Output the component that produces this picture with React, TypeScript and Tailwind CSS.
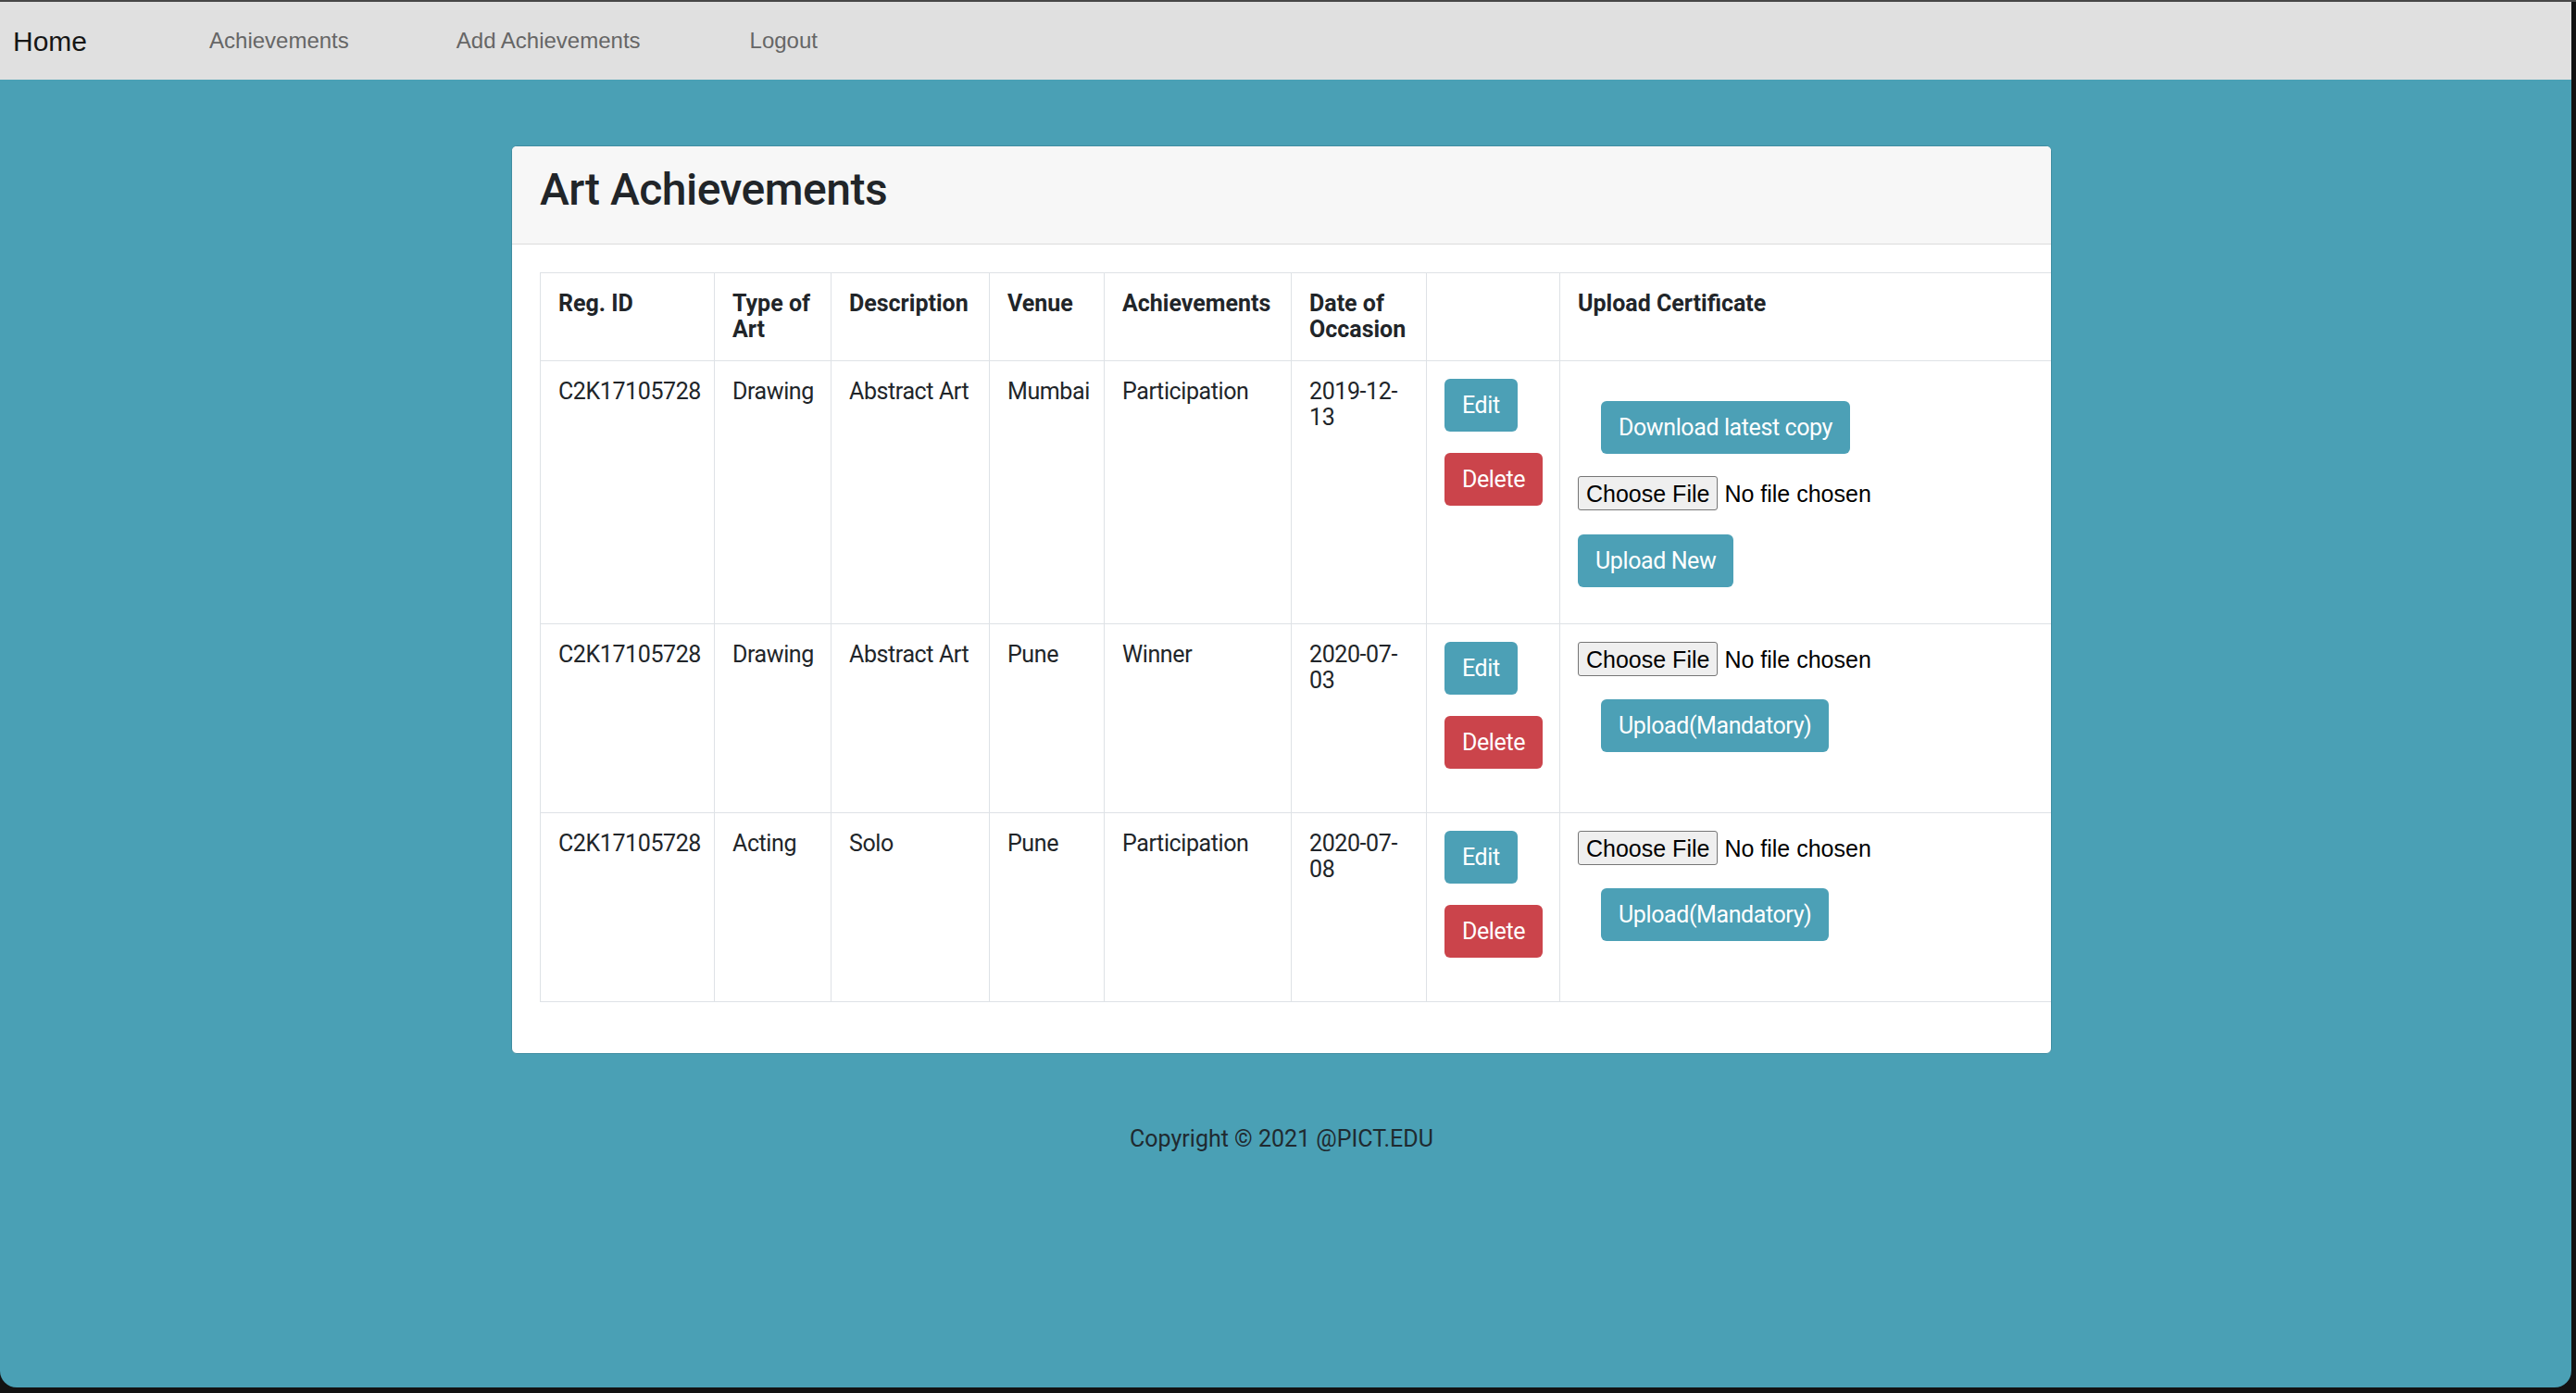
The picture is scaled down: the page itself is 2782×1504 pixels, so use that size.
import React from "react";

type Row = {
  id: string;
  type: string;
  desc: string;
  venue: string;
  ach: string;
  date: [string, string];
  first?: boolean;
};

const rows: Row[] = [
  { id: "C2K17105728", type: "Drawing", desc: "Abstract Art", venue: "Mumbai", ach: "Participation", date: ["2019-12-", "13"], first: true },
  { id: "C2K17105728", type: "Drawing", desc: "Abstract Art", venue: "Pune", ach: "Winner", date: ["2020-07-", "03"] },
  { id: "C2K17105728", type: "Acting", desc: "Solo", venue: "Pune", ach: "Participation", date: ["2020-07-", "08"] },
];

function InfoBtn({ children, className = "" }: { children: React.ReactNode; className?: string }) {
  return (
    <button
      className={
        "h-[57px] px-[19px] rounded-[6px] bg-[#4ca0b6] text-white text-[25px] leading-[28px] tracking-[-0.4px] whitespace-nowrap font-['Roboto',sans-serif] " +
        className
      }
    >
      {children}
    </button>
  );
}

function DangerBtn({ children, className = "" }: { children: React.ReactNode; className?: string }) {
  return (
    <button
      className={
        "h-[57px] px-[19px] rounded-[6px] bg-[#cb444b] text-white text-[25px] leading-[28px] tracking-[-0.4px] whitespace-nowrap font-['Roboto',sans-serif] " +
        className
      }
    >
      {children}
    </button>
  );
}

function FileInput() {
  return (
    <div className="flex items-center h-[37px] font-['Liberation_Sans',sans-serif] text-[25px] tracking-normal text-black">
      <span className="h-[37px] px-[8px] flex items-center bg-[#efefef] border border-[#767676] rounded-[3px] whitespace-nowrap">
        Choose File
      </span>
      <span className="ml-[7px] whitespace-nowrap">No file chosen</span>
    </div>
  );
}

const th =
  "border border-[#dee2e6] px-[19px] py-[19px] align-top text-left font-bold tracking-normal whitespace-nowrap";
const td = "border border-[#dee2e6] px-[19px] py-[19px] align-top text-left whitespace-nowrap";

export default function App() {
  return (
    <div className="w-[2782px] h-[1504px] bg-[#121212] overflow-hidden">
      <div className="h-[2px] w-full bg-[#474747]" />
      <div className="w-[2777px] h-[1496px] rounded-b-[18px] overflow-hidden bg-[#4aa0b5] flex flex-col">
        {/* Navbar */}
        <nav className="h-[84px] bg-[#e0e0e0] flex items-center font-['Liberation_Sans',sans-serif] shrink-0">
          <span className="ml-[14px] text-[30px] text-[#161616]">Home</span>
          <span className="ml-[132px] text-[24px] text-[#666666]">Achievements</span>
          <span className="ml-[116px] text-[24px] text-[#666666]">Add Achievements</span>
          <span className="ml-[118px] text-[24px] text-[#666666]">Logout</span>
        </nav>

        {/* Card */}
        <div className="ml-[552px] mt-[71px] w-[1664px] bg-white rounded-[6px] overflow-hidden border border-[#3f8da1] font-['Roboto',sans-serif] text-[#212529]">
          <div className="h-[106px] bg-[#f7f7f7] border-b border-[#dcdcdc] px-[30px] pt-[18px]">
            <h2 className="text-[48px] leading-[58px] font-medium tracking-[-0.5px]">Art Achievements</h2>
          </div>
          <div className="pl-[30px] pt-[30px] pb-[55px]">
            <table className="table-fixed border-collapse w-[1643px] text-[25px] leading-[28px] tracking-[-0.4px]">
              <colgroup>
                <col className="w-[188px]" />
                <col className="w-[126px]" />
                <col className="w-[171px]" />
                <col className="w-[124px]" />
                <col className="w-[202px]" />
                <col className="w-[146px]" />
                <col className="w-[144px]" />
                <col className="w-[542px]" />
              </colgroup>
              <thead>
                <tr>
                  <th className={th}>Reg. ID</th>
                  <th className={th}>
                    Type of
                    <br />
                    Art
                  </th>
                  <th className={th}>Description</th>
                  <th className={th}>Venue</th>
                  <th className={th}>Achievements</th>
                  <th className={th}>
                    Date of
                    <br />
                    Occasion
                  </th>
                  <th className={th}></th>
                  <th className={th}>Upload Certificate</th>
                </tr>
              </thead>
              <tbody>
                {rows.map((r, i) => (
                  <tr key={i}>
                    <td className={td}>{r.id}</td>
                    <td className={td}>{r.type}</td>
                    <td className={td}>{r.desc}</td>
                    <td className={td}>{r.venue}</td>
                    <td className={td}>{r.ach}</td>
                    <td className={td}>
                      {r.date[0]}
                      <br />
                      {r.date[1]}
                    </td>
                    <td className={td}>
                      <div className="flex flex-col items-start">
                        <InfoBtn>Edit</InfoBtn>
                        <DangerBtn className="mt-[23px] mb-[28px]">Delete</DangerBtn>
                      </div>
                    </td>
                    <td className={td}>
                      {r.first ? (
                        <div className="flex flex-col items-start">
                          <InfoBtn className="ml-[25px] mt-[24px]">Download latest copy</InfoBtn>
                          <div className="mt-[24px]">
                            <FileInput />
                          </div>
                          <InfoBtn className="mt-[26px] mb-[20px]">Upload New</InfoBtn>
                        </div>
                      ) : (
                        <div className="flex flex-col items-start">
                          <FileInput />
                          <InfoBtn className="ml-[25px] mt-[25px]">Upload(Mandatory)</InfoBtn>
                        </div>
                      )}
                    </td>
                  </tr>
                ))}
              </tbody>
            </table>
          </div>
        </div>

        {/* Footer */}
        <div className="ml-[552px] w-[1664px] mt-[78px] text-center font-['Roboto',sans-serif] text-[25px] leading-[28px] text-[#1f2a30]">
          Copyright © 2021 @PICT.EDU
        </div>
      </div>
    </div>
  );
}
